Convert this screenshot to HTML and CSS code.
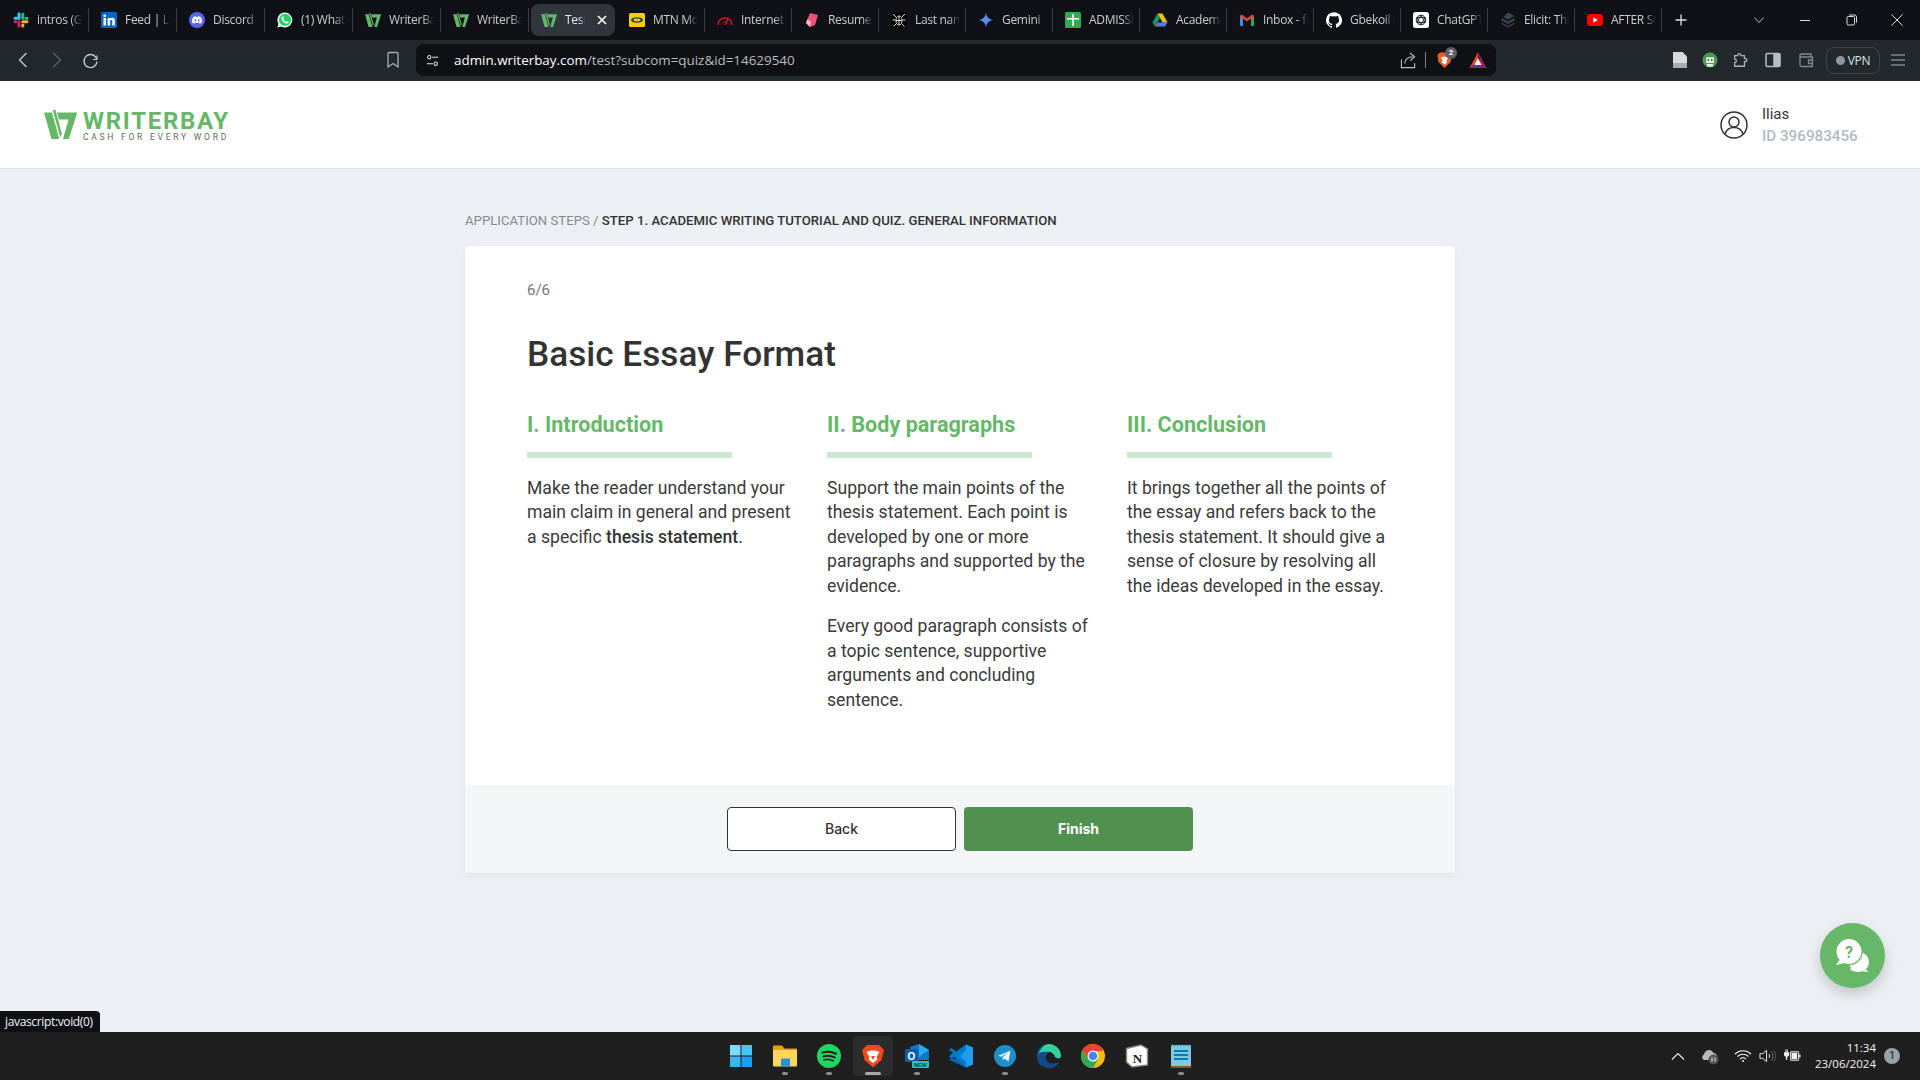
FILE: index.html
```html
<!DOCTYPE html>
<html lang="en">
<head>
<meta charset="utf-8">
<title>Test</title>
<link rel="stylesheet" href="styles.css">
</head>
<body>
<svg class="defs" width="0" height="0" aria-hidden="true">
  <symbol id="wb" viewBox="0 0 33 29">
    <path d="M0 2.500H8L15.200 29H7.500Z"/>
    <path d="M8.700 0H11.500L17.800 23.500 16.300 27.500Z"/>
    <path d="M13 2.500H33.300L24.800 29H19L24.500 9.500H15Z"/>
  </symbol>
</svg>

<div class="tabbar">
  <div class="tab"><svg class="ic" viewBox="0 0 16 16" fill="none" stroke-width="3" stroke-linecap="round"><path d="M6 1.800V6.200H2" stroke="#36c5f0"/><path d="M9.800 2V6.200" stroke="#2eb67d"/><path d="M14 6.200H13" stroke="#2eb67d"/><path d="M9.800 9.800H14" stroke="#ecb22e"/><path d="M9.800 14V13" stroke="#ecb22e"/><path d="M6 9.800V14" stroke="#e01e5a"/><path d="M2 9.800H3" stroke="#e01e5a"/></svg><span class="tab-t">intros (Genius)</span></div>
  <div class="tab"><svg class="ic" viewBox="0 0 16 16"><rect width="16" height="16" rx="1.500" fill="#0a66c2"/><path fill="#fff" d="M2.500 6H5V13.500H2.500ZM3.700 2.400A1.400 1.400 0 1 1 3.700 5.200 1.400 1.400 0 0 1 3.700 2.400ZM6.600 6H9V7C9.500 6.200 10.300 5.800 11.300 5.800 13 5.800 13.800 6.900 13.800 8.800V13.500H11.300V9.300C11.300 8.400 11 7.900 10.300 7.900 9.500 7.900 9.100 8.500 9.100 9.400V13.500H6.600Z"/></svg><span class="tab-t">Feed | LinkedIn</span></div>
  <div class="tab"><svg class="ic" viewBox="0 0 16 16"><circle cx="8" cy="8" r="8" fill="#5865f2"/><path fill="#fff" d="M11.600 4.900A8 8 0 0 0 9.600 4.300L9.300 4.800A7 7 0 0 0 6.700 4.800L6.400 4.300A8 8 0 0 0 4.400 4.900C3.100 6.800 2.800 8.700 2.900 10.500A8 8 0 0 0 5.400 11.700L5.900 10.900 5 10.500 5.300 10.300C7 11.100 9 11.100 10.700 10.300L11 10.500 10.100 10.900 10.600 11.700A8 8 0 0 0 13.100 10.500C13.300 8.400 12.700 6.500 11.600 4.900ZM6.300 9.400C5.800 9.400 5.400 8.900 5.400 8.300 5.400 7.700 5.800 7.300 6.300 7.300 6.800 7.300 7.200 7.800 7.200 8.300 7.200 8.900 6.800 9.400 6.300 9.400ZM9.700 9.400C9.200 9.400 8.800 8.900 8.800 8.300 8.800 7.700 9.200 7.300 9.700 7.300 10.200 7.300 10.600 7.800 10.600 8.300 10.600 8.900 10.200 9.400 9.700 9.400Z"/></svg><span class="tab-t">Discord</span></div>
  <div class="tab"><svg class="ic" viewBox="0 0 16 16"><path fill="#fff" d="M8 .4A7.500 7.500 0 0 0 1.500 11.700L.4 15.600 4.400 14.600A7.500 7.500 0 1 0 8 .4Z"/><circle cx="8" cy="7.900" r="6.100" fill="#25d366"/><path fill="#fff" d="M5.700 4.300C5.400 4.300 4.400 5 4.400 6.300 4.400 8.400 7.400 11.600 10 11.600 11.100 11.600 11.800 10.800 11.800 10.100 11.800 9.800 10.400 9 10 9 9.700 9 9.400 9.800 9.100 9.800 8.500 9.800 6.500 8.100 6.500 7.300 6.500 7 7 6.700 7 6.400 7 6 6.400 4.300 5.700 4.300Z"/></svg><span class="tab-t">(1) WhatsApp</span></div>
  <div class="tab"><svg class="ic wg" viewBox="0 0 33 29"><use href="#wb"/></svg><span class="tab-t">WriterBay</span></div>
  <div class="tab"><svg class="ic wg" viewBox="0 0 33 29"><use href="#wb"/></svg><span class="tab-t">WriterBay</span></div>
  <div class="tab tab-active"><svg class="ic wg" viewBox="0 0 33 29"><use href="#wb"/></svg><span class="tab-t short">Test</span><svg class="x" viewBox="0 0 10 10" fill="none" stroke="#fff" stroke-width="1.600"><path d="M1 1 9 9M9 1 1 9"/></svg></div>
  <div class="tab"><svg class="ic" viewBox="0 0 16 16"><rect y="1" width="16" height="14" rx="1.500" fill="#fc0"/><ellipse cx="8" cy="8" rx="6" ry="2.800" fill="#143c6c"/><ellipse cx="8" cy="8" rx="3.500" ry="1.400" fill="#fc0"/></svg><span class="tab-t">MTN Mobile</span></div>
  <div class="tab nar"><svg class="ic" viewBox="0 0 16 16" fill="none" stroke="#d3182a" stroke-width="1.600"><path d="M1 13A7 7 0 0 1 15 13"/><path d="M4.500 13A3.500 3.500 0 0 1 11.500 13" stroke="#5a1016"/><path d="M8 13 11 7" stroke="#d3182a"/></svg><span class="tab-t">Internet speed</span></div>
  <div class="tab nar"><svg class="ic" viewBox="0 0 16 16"><path fill="#f0507c" d="M6 1 14 3 11 13 6 15 2 11Z"/><path fill="#ffb4c6" d="M2 11 6 15 7 10 3.500 7Z"/></svg><span class="tab-t">Resume Builder</span></div>
  <div class="tab nar"><svg class="ic" viewBox="0 0 16 16" fill="none" stroke="#ddd" stroke-width="1"><rect width="16" height="16" fill="#000" stroke="none"/><ellipse cx="8" cy="8.500" rx="3" ry="4.500"/><path d="M5 5 2 2M11 5 14 2M4.500 8H1.500M11.500 8H14.500M5 12 2.500 14.500M11 12 13.500 14.500M5 8.500H11M8 4V13"/></svg><span class="tab-t">Last name</span></div>
  <div class="tab nar"><svg class="ic" viewBox="0 0 16 16"><path fill="#5b8def" d="M8 .5C8.500 4.800 11.200 7.500 15.500 8 11.200 8.500 8.500 11.200 8 15.500 7.500 11.200 4.800 8.500 .5 8 4.800 7.500 7.500 4.800 8 .5Z"/></svg><span class="tab-t">Gemini</span></div>
  <div class="tab nar"><svg class="ic" viewBox="0 0 16 16"><rect width="16" height="16" rx="1.500" fill="#34a853"/><path fill="#fff" d="M7.200 2H8.800V6H14V7.600H8.800V14H7.200V7.600H2V6H7.200Z"/></svg><span class="tab-t">ADMISSIONS</span></div>
  <div class="tab nar"><svg class="ic" viewBox="0 0 16 16"><path fill="#fbbc04" d="M5.500 1.500H10.500L15.500 10.500H10.500Z"/><path fill="#0f9d58" d="M5.500 1.500 8 6 3 14.500 .5 10.500Z"/><path fill="#4285f4" d="M5.700 10.500H15.500L13 14.500H3Z"/><path fill="#ea4335" d="M3 14.500 5.700 10.500H8L5 14.500Z" opacity=".6"/></svg><span class="tab-t">Academic</span></div>
  <div class="tab nar"><svg class="ic" viewBox="0 0 16 16"><path fill="#4285f4" d="M1 4H4V14H2A1 1 0 0 1 1 13Z"/><path fill="#34a853" d="M12 4H15V13A1 1 0 0 1 14 14H12Z"/><path fill="#ea4335" d="M1 4.500C1 2.800 2.500 2.200 3.500 3L8 6.400 12.500 3C13.500 2.200 15 2.800 15 4.500L8 9.600Z"/></svg><span class="tab-t">Inbox - fiifi</span></div>
  <div class="tab nar"><svg class="ic" viewBox="0 0 16 16"><path fill="#fff" d="M8 .2A8 8 0 0 0 5.500 15.800C5.900 15.900 6 15.600 6 15.400V14C3.800 14.500 3.300 13 3.300 13 2.900 12.100 2.400 11.800 2.400 11.800 1.700 11.300 2.500 11.300 2.500 11.300 3.300 11.400 3.700 12.100 3.700 12.100 4.400 13.300 5.600 13 6 12.800 6.100 12.300 6.300 12 6.500 11.800 4.700 11.600 2.900 10.900 2.900 7.900 2.900 7 3.200 6.300 3.700 5.800 3.600 5.600 3.400 4.800 3.800 3.700 3.800 3.700 4.500 3.500 6 4.500A7.700 7.700 0 0 1 10 4.500C11.500 3.500 12.200 3.700 12.200 3.700 12.600 4.800 12.400 5.600 12.300 5.800 12.800 6.300 13.100 7 13.100 7.900 13.100 10.900 11.300 11.600 9.500 11.800 9.800 12 10 12.500 10 13.300V15.400C10 15.600 10.100 15.900 10.500 15.800A8 8 0 0 0 8 .2Z"/></svg><span class="tab-t">Gbekoil repo</span></div>
  <div class="tab nar"><svg class="ic" viewBox="0 0 16 16" fill="none" stroke="#222" stroke-width="1"><rect width="16" height="16" rx="2.500" fill="#fff" stroke="none"/><circle cx="8" cy="8" r="4.800"/><path d="M8 3.200 12 10.400H4ZM3.800 5.600H12.200L8 12.800Z"/></svg><span class="tab-t">ChatGPT</span></div>
  <div class="tab nar"><svg class="ic" viewBox="0 0 16 16"><path fill="#3a4652" d="M8 .5 14.500 4 8 7.500 3.500 5ZM1.500 6 8 9.500 14.500 6V8.500L8 12 1.500 8.500ZM1.500 10.500 8 14 14.500 10.500V12L8 15.500 1.500 12Z"/></svg><span class="tab-t">Elicit: The AI</span></div>
  <div class="tab nar"><svg class="ic" viewBox="0 0 16 16"><rect y="2" width="16" height="12" rx="3" fill="#f00"/><path fill="#fff" d="M6.300 5.300 10.800 8 6.300 10.700Z"/></svg><span class="tab-t">AFTER SCHOOL</span></div>
  <svg class="tb-plus" viewBox="0 0 12 12" fill="none" stroke="#ddd" stroke-width="1.300"><path d="M6 .5V11.500M.5 6H11.500"/></svg>
  <div class="winctl">
    <svg class="wc" viewBox="0 0 46 12" fill="none" stroke="#b8bcc0"><path d="M18.500 3.500 23 8.500 27.500 3.500"/></svg>
    <svg class="wc" viewBox="0 0 46 12" fill="none" stroke="#ddd"><path d="M18 6.500H28"/></svg>
    <svg class="wc" viewBox="0 0 46 12" fill="none" stroke="#ddd"><rect x="19" y="2.500" width="7.500" height="8.500" rx="1.200"/><path d="M21 1H26.500A2 2 0 0 1 28.500 3V8.500"/></svg>
    <svg class="wc" viewBox="0 0 46 12" fill="none" stroke="#ddd"><path d="M17.500 .5 28.500 11.500M28.500 .5 17.500 11.500"/></svg>
  </div>
</div>

<div class="toolbar">
  <div class="tl-left">
    <svg class="slot" viewBox="0 0 34 20" fill="none" stroke="#c8ccd0" stroke-width="1.300"><path d="M20.500 3 13.500 10 20.500 17"/></svg>
    <svg class="slot" viewBox="0 0 34 20" fill="none" stroke="#5c6266" stroke-width="1.300"><path d="M13.500 3 20.500 10 13.500 17"/></svg>
    <svg class="slot" viewBox="0 0 34 20" fill="none" stroke="#c8ccd0" stroke-width="1.300"><path d="M22.500 8.500A6.500 6.500 0 1 0 23 11.500"/><path d="M23 5.500V9.500H19" stroke-width="1.200"/></svg>
    <svg class="slot bm" viewBox="0 0 34 20" fill="none" stroke="#a8adb2" stroke-width="1.300"><path d="M12 3.500A1 1 0 0 1 13 2.500H21A1 1 0 0 1 22 3.500V17L17 13.500 12 17Z"/></svg>
  </div>
  <div class="addr">
    <svg class="tune" viewBox="0 0 14 14" fill="none" stroke="#dfe2e5" stroke-width="1.100"><circle cx="3.500" cy="3.500" r="1.800"/><path d="M6.500 3.500H13M1 10.500H7.500"/><circle cx="10.500" cy="10.500" r="1.800"/></svg>
    <span class="url"><span class="host">admin.writerbay.com</span>/test?subcom=quiz&amp;id=14629540</span>
    <svg class="a-share" viewBox="0 0 18 18" fill="none" stroke="#b8bcc0" stroke-width="1.200"><path d="M1.500 8V16.500H15.500V12"/><path d="M5 12C5.500 7.500 9 5 13.500 5"/><path d="M10.500 1 15.500 5 11 9"/></svg>
    <span class="a-div"></span>
    <span class="lion"><svg class="lion-i" viewBox="0 0 16 18"><path fill="#f15a22" d="M3 1H13L15.500 3.500 14.500 11 8 17.500 1.500 11 .5 3.500Z"/><path fill="#fff" d="M4 6 7 5.500H9L12 6 10 10 11 11.500 8 14 5 11.500 6 10Z"/></svg><span class="lion-n">2</span></span>
    <svg class="tri" viewBox="0 0 18 18"><path fill="#ff4724" d="M9 1 5 9 .5 17H9Z"/><path fill="#662d91" d="M9 10 17.500 17H.5Z"/><path fill="#9e1f63" d="M9 1 17.500 17H12Z"/><path fill="#fff" d="M9 7 12.500 14H5.500Z"/></svg>
  </div>
  <div class="tl-right">
    <svg class="ti" viewBox="0 0 16 18"><path fill="#d8dadc" d="M1 1H10.500L15 5.500V17H1Z"/><rect x="1" y="12" width="14" height="5" fill="#a9acaf"/></svg>
    <svg class="ti" viewBox="0 0 18 18"><circle cx="9" cy="9" r="8.500" fill="#4a9a52"/><rect x="4.500" y="6" width="9" height="6.500" rx="1" fill="#e5efe6"/><circle cx="7" cy="9" r="1" fill="#2c5b30"/><circle cx="11" cy="9" r="1" fill="#2c5b30"/><rect x="5.500" y="13.500" width="7" height="3" fill="#e5efe6"/></svg>
    <svg class="ti t3" viewBox="0 0 18 18" fill="none" stroke="#a9b2b8" stroke-width="1.500"><path d="M3 4H6.500C6.500 1 10 1 10 4H14V7.500C17.500 7.500 17.500 11 14 11V16H3V12C5.500 12 5.500 8 3 8Z"/></svg>
    <svg class="ti t4" viewBox="0 0 16 16" fill="none" stroke="#b4c0c6" stroke-width="1.500"><rect x="1" y="1.500" width="14" height="13" rx="1.500"/><rect x="9" y="2" width="5.500" height="12" fill="#b4c0c6"/></svg>
    <svg class="ti t5" viewBox="0 0 16 16" fill="none" stroke="#7e8a90" stroke-width="1.300"><path d="M2 4V13A1.500 1.500 0 0 0 3.500 14.500H14.500V5H3A1.200 1.200 0 0 1 2 3.500 1.500 1.500 0 0 1 3.500 2H13V5"/><path d="M15 8H10.500V11.500H15"/></svg>
    <div class="vpn"><span class="vpn-dot"></span>VPN</div>
    <svg class="ham" viewBox="0 0 14 12" fill="none" stroke="#a9b2b8" stroke-width="1.200"><path d="M0 1H14M0 6H14M0 11H14"/></svg>
  </div>
</div>

<div class="page">
  <header class="site-head">
    <div class="logo">
      <svg class="logo-i" viewBox="0 0 33 29"><use href="#wb"/></svg>
      <div class="logo-t">
        <div class="logo-n">WRITERBAY</div>
        <div class="logo-s">CASH FOR EVERY WORD</div>
      </div>
    </div>
    <div class="user">
      <svg class="user-i" viewBox="0 0 28 28" fill="none" stroke="#333" stroke-width="1.500"><circle cx="14" cy="14" r="13"/><circle cx="14" cy="11" r="5"/><path d="M5 23C6.500 18.500 10 16.500 14 16.500S21.500 18.500 23 23"/></svg>
      <div>
        <div class="user-n">Ilias</div>
        <div class="user-id">ID 396983456</div>
      </div>
    </div>
  </header>

  <main class="main">
    <div class="crumbs"><span class="crumb-a">Application steps /</span> Step 1. Academic writing tutorial and quiz. General information</div>
    <section class="card">
      <div class="card-b">
        <div class="count">6/6</div>
        <h1 class="title">Basic Essay Format</h1>
        <div class="cols">
          <div>
            <h2 class="col-h">I. Introduction</h2>
            <div class="col-bar"></div>
            <p class="col-p">Make the reader understand your main claim in general and present a specific <b class="strong">thesis statement</b>.</p>
          </div>
          <div>
            <h2 class="col-h">II. Body paragraphs</h2>
            <div class="col-bar"></div>
            <p class="col-p">Support the main points of the thesis statement. Each point is developed by one or more paragraphs and supported by the evidence.</p>
            <p class="col-p">Every good paragraph consists of a topic sentence, supportive arguments and concluding sentence.</p>
          </div>
          <div>
            <h2 class="col-h">III. Conclusion</h2>
            <div class="col-bar"></div>
            <p class="col-p">It brings together all the points of the essay and refers back to the thesis statement. It should give a sense of closure by resolving all the ideas developed in the essay.</p>
          </div>
        </div>
      </div>
      <div class="card-f">
        <button class="btn btn-o">Back</button>
        <button class="btn btn-g">Finish</button>
      </div>
    </section>
    <div class="chat">
      <svg class="chat-i" viewBox="0 0 34 34"><path fill="#fff" d="M23 13A10 10 0 1 1 16 31.500C14 31 13 30 16 29 22 28 25 22 25 16ZM26 28 33 33 25 32Z"/><circle cx="23" cy="23" r="10" fill="#fff"/><path fill="#66b868" d="M13 0A13.500 13.500 0 0 1 13 27H0V22A13.500 13.500 0 0 1 13 0Z" opacity="0"/><circle cx="13" cy="12.500" r="13.800" fill="#66b868"/><circle cx="13" cy="12.500" r="12.500" fill="#fff"/><path fill="#fff" d="M4 20 0 26 9 24Z"/><text x="13" y="18.500" class="chat-q">?</text></svg>
    </div>
    <div class="status">javascript:void(0)</div>
  </main>
</div>

<footer class="taskbar">
  <div></div>
  <div class="tb-c">
    <div class="tk"><svg class="tk-i" viewBox="0 0 24 24"><path fill="#7adcf9" d="M1 1H11.500V11.500H1Z"/><path fill="#48c4f6" d="M12.500 1H23V11.500H12.500Z"/><path fill="#3ab4f2" d="M1 12.500H11.500V23H1Z"/><path fill="#1aa0ef" d="M12.500 12.500H23V23H12.500Z"/></svg></div>
    <div class="tk"><svg class="tk-i" viewBox="0 0 24 24"><path fill="#e3a010" d="M0 2.500A1 1 0 0 1 1 1.500H9L11.500 4.500H23A1 1 0 0 1 24 5.500V8H0Z"/><path fill="#ffd75e" d="M0 6H24V21.500A1 1 0 0 1 23 22.500H1A1 1 0 0 1 0 21.500Z"/><path fill="#2d8fd5" d="M8 15.500A1 1 0 0 1 9 14.500H16A1 1 0 0 1 17 15.500V22.500H8Z"/></svg><span class="dot"></span></div>
    <div class="tk"><svg class="tk-i" viewBox="0 0 24 24" fill="none" stroke="#1e1e1e" stroke-linecap="round"><circle cx="12" cy="12" r="12" fill="#1ed760" stroke="none"/><path d="M5.500 8.500C10 7.300 15 7.600 19 9.800" stroke-width="2.200"/><path d="M6.200 12.300C10 11.300 14.500 11.700 17.800 13.500" stroke-width="1.900"/><path d="M7 15.800C10 15 13.500 15.300 16.500 16.800" stroke-width="1.600"/></svg><span class="dot"></span></div>
    <div class="tk tk-on"><svg class="tk-i" viewBox="0 0 24 24"><path fill="#f1481f" d="M6 1H18L21.500 4.500 23 6 20.500 16 12 23.500 3.500 16 1 6 2.500 4.500Z"/><path fill="#fff" d="M5.500 8 9.500 6.500H14.500L18.500 8 15.500 13 16.500 15.500 12 19 7.500 15.500 8.500 13Z"/><path fill="#f1481f" d="M10 12H14L12 16Z"/></svg><span class="dot dot-w"></span></div>
    <div class="tk"><svg class="tk-i" viewBox="0 0 24 24"><path fill="#0f77c7" d="M5 3 14 0 24 6V16H5Z"/><path fill="#28a8ea" d="M14 0 24 6 14 13Z"/><rect y="5" width="13" height="13" rx="1" fill="#0a5ea8"/><text x="6.500" y="15.500" class="ol-o">O</text><rect x="7" y="17" width="17" height="7" rx="1" fill="#23c7c7"/><text x="15.500" y="22.800" class="ol-n">NEW</text></svg><span class="dot"></span></div>
    <div class="tk"><svg class="tk-i" viewBox="0 0 24 24"><path fill="#0065a9" d="M17 .5 24 3.500V20.500L17 23.500 0 16 2.500 14 17 16.500Z"/><path fill="#007acc" d="M17 .5V23.500L5 12.500 2.500 14.500 0 12.500 4 8.500 0 6 2.500 4 7 7.500Z"/><path fill="#1f9cf0" d="M17 .5 24 3.500V20.500L17 23.500V18L11 12 17 6Z"/></svg></div>
    <div class="tk"><svg class="tk-i" viewBox="0 0 24 24"><circle cx="12" cy="12" r="11" fill="#1f8fcc"/><path fill="#e8f4fa" d="M5 11.800 17.500 6.800 15.500 17.500 11.500 14.500 9.800 16.200 9.500 13.200 15 8.500 8 12.800Z"/></svg><span class="dot"></span></div>
    <div class="tk"><svg class="tk-i" viewBox="0 0 24 24"><path fill="#0c59a4" d="M12 0C5 0 0 5 0 12 0 19 5.500 24 12 24 16 24 20 22 22 19 18 20.500 11 20 9 16 7.500 12 10 8 14 8 19 8 23 11 24 12 23 5 18 0 12 0Z"/><path fill="#34d0a0" d="M12 0C17 0 24 4 24 12 24 15 20 15 18 13 17 9 13 7 9 8 7 8.500 3 11 1.500 15 1 6 7 0 12 0Z"/><path fill="#114a8b" d="M9 16C11 20 18 20.500 22 19 20 22 16 24 12 24 6 24 0 19 0 12 2 8 6 7 9 8 7 10 7.500 13 9 16Z"/></svg></div>
    <div class="tk"><svg class="tk-i" viewBox="0 0 24 24"><circle cx="12" cy="12" r="12" fill="#fbbc04"/><path fill="#ea4335" d="M12 0A12 12 0 0 0 1.600 6L6.800 15 12 7H22.400A12 12 0 0 0 12 0Z"/><path fill="#34a853" d="M1.600 6A12 12 0 0 0 12 24L17.200 15 6.800 15Z"/><circle cx="12" cy="12" r="5.500" fill="#fff"/><circle cx="12" cy="12" r="4.300" fill="#4285f4"/></svg></div>
    <div class="tk"><svg class="tk-i" viewBox="0 0 24 24"><path fill="#fff" stroke="#888" stroke-width="1.400" d="M1.500 4.500 16 1 22.500 5V21L7 23 1.500 18Z"/><text x="12.500" y="18.500" class="no-n">N</text></svg></div>
    <div class="tk"><svg class="tk-i" viewBox="0 0 24 24"><rect x="2" y="1" width="20" height="22" fill="#7ec8e0"/><rect x="2" y="22" width="20" height="2" fill="#8a5a20"/><path stroke="#0f7aa8" stroke-width="2" d="M5 7H19M5 11H19M5 15H19"/><path stroke="#2f9dc4" stroke-width="1.500" stroke-dasharray="1.500 1.500" d="M2 1.500H22"/></svg><span class="dot"></span></div>
  </div>
  <div class="tray">
    <svg class="tr tr-c" viewBox="0 0 14 8" fill="none" stroke="#eee" stroke-width="1.100"><path d="M1 7.500 7 1.500 13 7.500"/></svg>
    <svg class="tr tr-o" viewBox="0 0 18 18"><path fill="#bcbcbc" d="M3 13A3 3 0 0 1 3 7.500 5 5 0 0 1 12.500 6 4 4 0 0 1 15 13Z"/><circle cx="12.500" cy="12.500" r="5" fill="#555"/><path stroke="#eee" d="M11 10.500V14.500M14 10.500V14.500"/></svg>
    <svg class="tr tr-w" viewBox="0 0 18 14" fill="none" stroke="#eee" stroke-width="1.100"><path d="M1 5A11.500 11.500 0 0 1 17 5M3.500 7.500A8 8 0 0 1 14.500 7.500M6 10A4.500 4.500 0 0 1 12 10"/><circle cx="9" cy="12" r="1" fill="#eee" stroke="none"/></svg>
    <svg class="tr tr-v" viewBox="0 0 18 14" fill="none" stroke="#eee"><path d="M1 4.500H4L8 1V13L4 9.500H1Z"/><path d="M10.500 5A3 3 0 0 1 10.500 9"/><path d="M13 2.500A6.500 6.500 0 0 1 13 11.500" stroke="#777"/><path d="M15.500 1A9 9 0 0 1 15.500 13" stroke="#555"/></svg>
    <svg class="tr tr-b" viewBox="0 0 18 14"><path stroke="#eee" fill="none" d="M7 2.500H15.500V11.500H7Z"/><rect x="8" y="3.500" width="6" height="7" fill="#eee"/><rect x="16" y="5.500" width="1.500" height="3" fill="#eee"/><path fill="#eee" d="M1.500 0V3H0V6.500L2 8V11H3.500V8L5.500 6.500V3H4V0H3V3H2.500V0Z"/></svg>
    <div class="clock"><div>11:34</div><div>23/06/2024</div></div>
    <div class="badge">1</div>
  </div>
</footer>
</body>
</html>
```

FILE: styles.css
```css
* { box-sizing: border-box; }
html, body { margin: 0; padding: 0; }
body {
  width: 1920px;
  height: 1080px;
  overflow: hidden;
  display: flex;
  flex-direction: column;
  font-family: Roboto, "Liberation Sans", sans-serif;
  background: #eceff3;
  color: #333;
}
.defs { position: absolute; }

/* Browser tabs */
.tabbar {
  height: 40px;
  flex: none;
  display: flex;
  align-items: center;
  padding-left: 1px;
  background: #0f1116;
  font-family: "Open Sans", "Noto Sans", sans-serif;
}
.tab {
  width: 88px;
  height: 24px;
  flex: none;
  display: flex;
  align-items: center;
  gap: 8px;
  padding-left: 12px;
  border-right: 1px solid #3a3d42;
  color: #c9cccf;
  font-size: 12px;
  letter-spacing: -.3px;
}
.tab.nar { width: 87px; }
.tab-active {
  height: 32px;
  width: 84px;
  margin: 0 2px;
  padding-left: 10px;
  background: #30363b;
  border-right: 0;
  border-radius: 8px;
  color: #e6e8ea;
}
.ic { width: 16px; height: 16px; flex: none; }
.wg { fill: #66b868; }
.tab-t {
  width: 45px;
  padding-bottom: 2px;
  overflow: hidden;
  white-space: nowrap;
  -webkit-mask-image: linear-gradient(90deg, #000 75%, transparent);
  mask-image: linear-gradient(90deg, #000 75%, transparent);
}
.tab-t.short { width: 20px; }
.x { width: 10px; height: 10px; margin-left: 4px; flex: none; }
.tb-plus { width: 12px; height: 12px; margin-left: 13px; flex: none; }
.winctl { margin-left: auto; display: flex; }
.wc { width: 46px; height: 12px; display: block; }

/* Browser toolbar */
.toolbar {
  height: 41px;
  flex: none;
  display: flex;
  align-items: center;
  padding-bottom: 1px;
  background: #22282c;
}
.tl-left { width: 416px; flex: none; display: flex; align-items: center; padding-left: 6px; }
.slot { width: 34px; height: 20px; flex: none; }
.bm { margin-left: 268px; }
.addr {
  width: 1080px;
  height: 32px;
  flex: none;
  display: flex;
  align-items: center;
  padding-left: 10px;
  border-radius: 8px;
  background: #0e1014;
}
.tune { width: 13px; height: 13px; flex: none; }
.url {
  margin-left: 15px;
  font-family: "Open Sans", "Noto Sans", sans-serif;
  font-size: 13.400px;
  color: #b9bdc1;
  white-space: nowrap;
}
.host { color: #fff; }
.a-share { width: 17px; height: 17px; margin-left: auto; flex: none; }
.a-div { width: 1px; height: 16px; margin-left: 8px; background: #7d8185; flex: none; }
.lion { position: relative; margin-left: 11px; width: 16px; height: 18px; flex: none; }
.lion-i { display: block; width: 15px; height: 18px; }
.lion-n {
  position: absolute;
  top: -4px;
  left: 8px;
  width: 12px;
  height: 12px;
  border-radius: 50%;
  background: #5b5f6b;
  color: #fff;
  font-size: 8px;
  font-weight: 700;
  line-height: 12px;
  text-align: center;
}
.tri { width: 18px; height: 18px; margin-left: 16px; margin-right: 9px; flex: none; }
.tl-right { flex: 1; display: flex; align-items: center; padding-left: 176px; }
.ti { width: 16px; height: 18px; flex: none; margin-right: 14px; }
.t3 { margin-right: 17px; }
.t4 { margin-right: 17px; }
.t5 { margin-right: 12px; }
.vpn {
  width: 54px;
  height: 27px;
  flex: none;
  display: flex;
  align-items: center;
  justify-content: center;
  gap: 3px;
  border: 1px solid #3d454b;
  border-radius: 8px;
  color: #dfe3e6;
  font-family: "Open Sans", sans-serif;
  font-size: 12px;
  letter-spacing: -.3px;
}
.vpn-dot { width: 9px; height: 9px; border-radius: 50%; background: #8f979d; }
.ham { width: 14px; height: 12px; margin-left: 11px; flex: none; }

/* Site */
.page { flex: 1; min-height: 0; display: flex; flex-direction: column; }
.site-head {
  height: 88px;
  flex: none;
  display: flex;
  align-items: center;
  justify-content: space-between;
  padding: 0 62px 0 44px;
  background: #fff;
  border-bottom: 1px solid #dfe3e7;
}
.logo { display: flex; align-items: center; gap: 6px; }
.logo-i { width: 33px; height: 29px; fill: #66b868; flex: none; }
.logo-t { padding-top: 3px; }
.logo-n {
  color: #66b868;
  font-size: 24px;
  font-weight: 700;
  line-height: 20px;
  letter-spacing: 1.700px;
}
.logo-s {
  margin-top: 2px;
  color: #666;
  font-size: 8.500px;
  line-height: 8px;
  letter-spacing: 2.750px;
  white-space: nowrap;
}
.user { display: flex; align-items: center; gap: 14px; width: 138px; }
.user-i { width: 28px; height: 28px; flex: none; }
.user-n { font-size: 15px; line-height: 22px; color: #333; }
.user-id { font-size: 15.200px; font-weight: 500; line-height: 22px; color: #b0bac2; white-space: nowrap; }

.main {
  position: relative;
  flex: 1;
  min-height: 0;
  display: flex;
  flex-direction: column;
  align-items: center;
  padding-top: 42px;
}
.crumbs {
  width: 990px;
  height: 35px;
  font-size: 13.200px;
  font-weight: 500;
  line-height: 20px;
  text-transform: uppercase;
  color: #333;
}
.crumb-a { color: #858a8f; font-weight: 400; }
.card {
  width: 990px;
  height: 627px;
  flex: none;
  display: flex;
  flex-direction: column;
  border-radius: 4px;
  background: #fff;
  box-shadow: 0 2px 6px rgba(0,0,0,.06);
  overflow: hidden;
}
.card-b { flex: 1; padding: 33px 62px 0; }
.count { font-size: 15px; line-height: 22px; color: #777; }
.title {
  margin: 31px 0 35px;
  font-size: 35.200px;
  font-weight: 500;
  line-height: 44px;
  color: #333;
}
.cols { display: grid; grid-template-columns: repeat(3, 265px); column-gap: 35px; }
.col-h {
  margin: 0;
  font-size: 21.600px;
  font-weight: 700;
  line-height: 28px;
  color: #66b868;
}
.col-bar { width: 205px; height: 6px; margin: 13px 0 17.500px; background: #cfe6d0; }
.col-p {
  margin: 0 0 15.500px;
  font-size: 17.600px;
  line-height: 24.640px;
  color: #3a3a3a;
}
.strong { font-weight: 500; color: #333; }
.card-f {
  height: 88px;
  flex: none;
  display: flex;
  align-items: center;
  justify-content: center;
  gap: 8px;
  background: #f4f5f7;
}
.btn {
  width: 229px;
  height: 44px;
  padding-bottom: 2px;
  border-radius: 4px;
  font-family: Inter, Roboto, sans-serif;
  font-size: 14px;
  cursor: pointer;
}
.btn-o { background: #fff; border: 1px solid #333; color: #333; font-weight: 500; }
.btn-g { background: #51914f; border: 0; color: #fff; font-weight: 700; }

.chat {
  position: absolute;
  right: 35px;
  top: 754px;
  width: 65px;
  height: 65px;
  display: flex;
  align-items: center;
  justify-content: center;
  border-radius: 50%;
  background: #66b868;
  box-shadow: 0 6px 14px rgba(0,0,0,.18);
}
.chat-i { width: 34px; height: 34px; }
.chat-q { font: 700 16px Roboto, sans-serif; fill: #66b868; text-anchor: middle; }
.status {
  position: absolute;
  left: 0;
  bottom: 0;
  width: 100px;
  height: 21px;
  padding-left: 5px;
  border-top-right-radius: 4px;
  background: #0e1014;
  color: #f2f4f6;
  font-family: "Open Sans", sans-serif;
  font-size: 12px;
  letter-spacing: -.35px;
  line-height: 21px;
  white-space: nowrap;
}

/* Windows taskbar */
.taskbar {
  height: 48px;
  flex: none;
  display: grid;
  grid-template-columns: 1fr auto 1fr;
  align-items: center;
  background: #1f1f1f;
}
.tb-c { display: flex; padding-left: 2px; }
.tk {
  position: relative;
  width: 44px;
  height: 40px;
  display: flex;
  align-items: center;
  justify-content: center;
}
.tk-on::before {
  content: "";
  position: absolute;
  top: 0;
  left: 2px;
  width: 40px;
  height: 40px;
  border-radius: 4px;
  background: #2c2c2c;
}
.tk-i { position: relative; width: 24px; height: 24px; display: block; }
.dot {
  position: absolute;
  left: 19px;
  bottom: 1px;
  width: 6px;
  height: 3px;
  border-radius: 2px;
  background: #8e8e8e;
}
.dot-w { left: 14px; width: 16px; background: #a8a8a8; }
.ol-o { font: 700 10px "Liberation Sans", sans-serif; fill: #fff; text-anchor: middle; }
.ol-n { font: 700 5.500px "Liberation Sans", sans-serif; fill: #143; text-anchor: middle; }
.no-n { font: 700 13px "Liberation Serif", serif; fill: #222; text-anchor: middle; }
.tray { display: flex; align-items: center; justify-content: flex-end; padding-right: 20px; color: #fff; }
.tr { flex: none; }
.tr-c { width: 14px; height: 8px; }
.tr-o { width: 18px; height: 18px; margin-left: 16px; }
.tr-w { width: 18px; height: 14px; margin-left: 15px; }
.tr-v { width: 17px; height: 14px; margin-left: 7px; }
.tr-b { width: 17px; height: 14px; margin-left: 8px; }
.clock {
  margin-left: 14px;
  font-family: "Open Sans", sans-serif;
  font-size: 11.500px;
  line-height: 16px;
  text-align: right;
  color: #f2f2f2;
}
.badge {
  width: 16px;
  height: 16px;
  margin-left: 8px;
  border-radius: 50%;
  background: #95a2a8;
  color: #1f1f1f;
  font-size: 11px;
  line-height: 16px;
  text-align: center;
}
```
